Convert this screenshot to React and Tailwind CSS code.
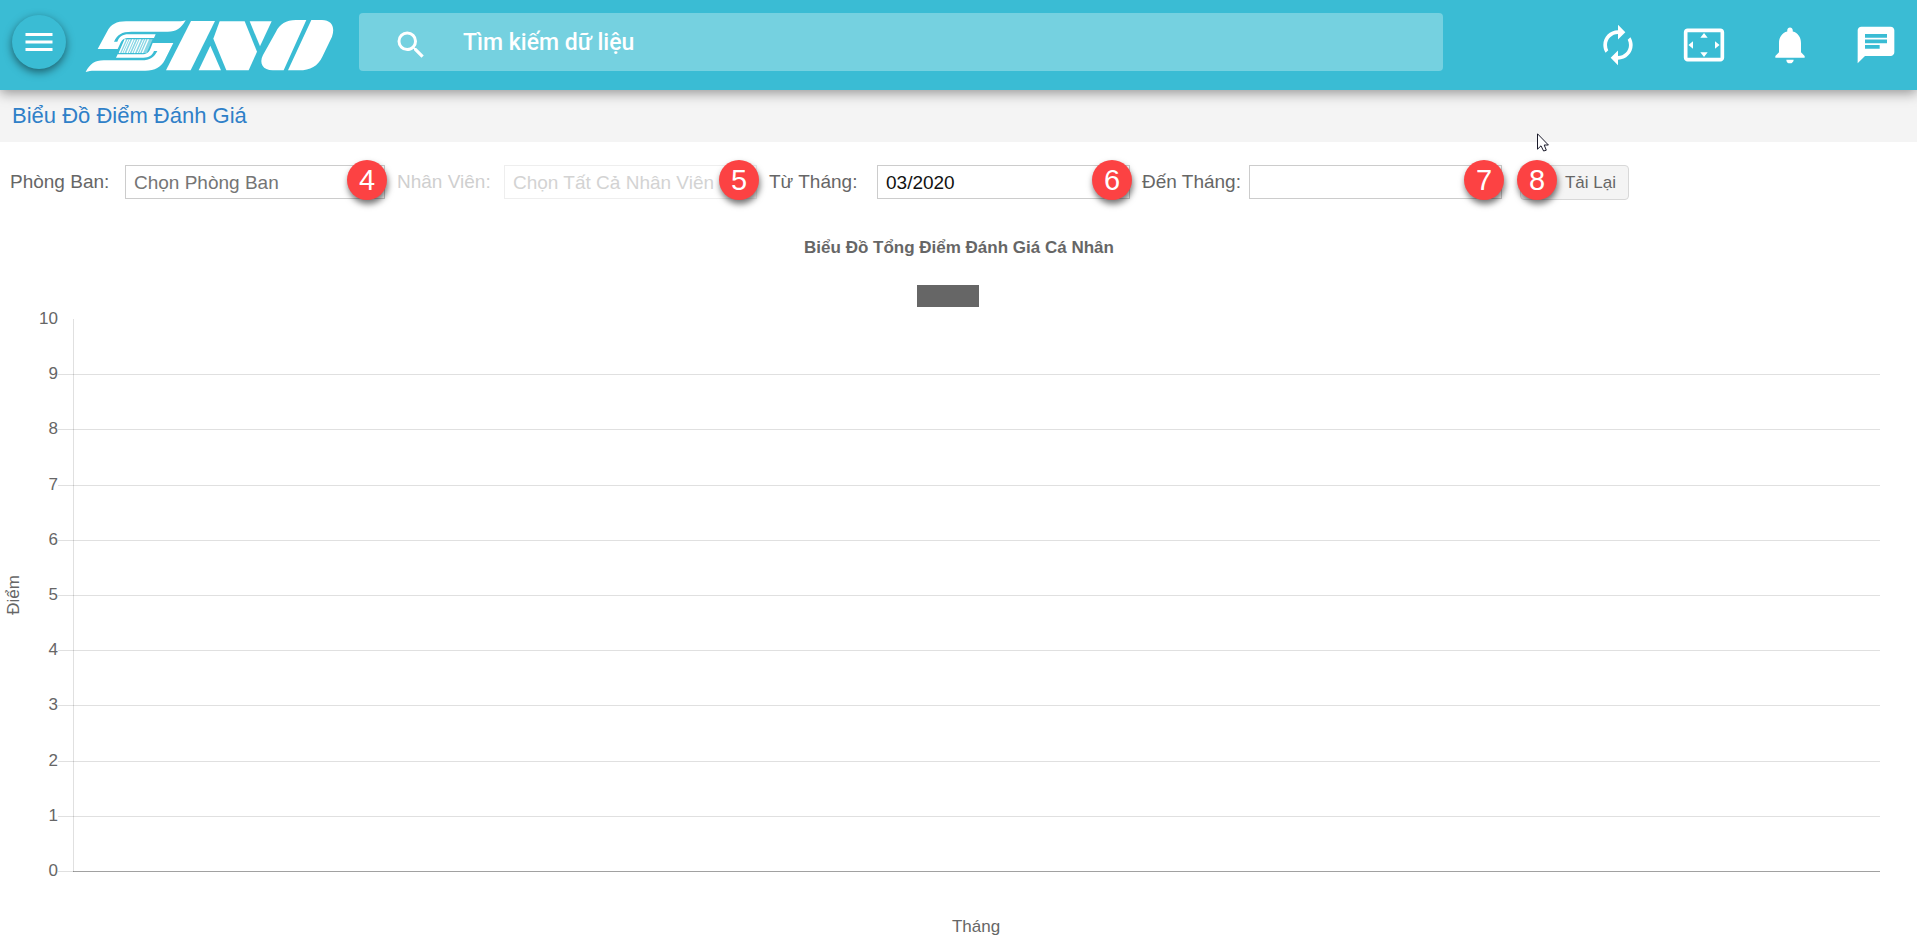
import React from "react";
import {
  MdAutorenew,
  MdSettingsOverscan,
  MdNotifications,
  MdChat,
  MdSearch,
  MdMenu,
} from "react-icons/md";

function Logo() {
  const bars = [376, 384, 390, 399, 406, 414, 421, 430, 437, 445];
  return (
    <svg viewBox="255 57 747 162" className="h-[54px] w-[249px] shrink-0" role="img" aria-label="SINO" fill="#fff">
      <path d="M557 61 C542 86 530 95 503 95 H395 C364 95 352 104 342 125 H352 C358 109 368 103 385 103 H467 L462 114 H388 C372 114 366 119 361 130 L353 147 H293 L321 95 C333 73 349 64 378 64 H535 C545 64 551 63 557 61 Z" />
      <path d="M257 216 C270 192 284 181 311 181 H425 C450 181 462 172 472 153 H462 C456 167 447 173 430 173 H348 L353 163 H425 C440 163 446 158 451 147 L458 129 H520 L494 181 C483 202 465 212 436 212 H283 C273 212 266 213 257 216 Z" />
      <path d="M374 118 H458 L440 159 H356 Z" opacity="0.4" />
      {bars.map((x, i) => (
        <path key={x} d={`M${x} 118 L${x - 18} 159`} stroke="#fff" strokeWidth={i % 3 === 0 ? 4 : 3} />
      ))}
      <path d="M573 63 H645 L572 211 H498 Z" />
      <path d="M631 137 L663 211 H596 Z" />
      <path d="M659 64 H734 L771 155 L746 211 H679 L640 116 Z" />
      <path d="M749 64 H815 L780 139 Z" />
      <path d="M919 60 H888 C858 60 839 73 828 95 L789 165 C776 190 789 211 818 211 H851 Z" />
      <path d="M934 60 H966 C995 60 1006 82 996 110 L967 170 C954 198 931 211 897 211 H864 Z" />
    </svg>
  );
}

function Badge({ n, className }) {
  return (
    <span
      className={`absolute flex h-10 w-10 items-center justify-center rounded-full bg-[#fc4243] text-[29px] leading-none text-white shadow-[1px_4px_6px_rgba(0,0,0,0.55)] ${className}`}
    >
      {n}
    </span>
  );
}

function Field({ id, label, n, labelClass, boxClass, disabled, ...rest }) {
  return (
    <div className={`flex items-center ${disabled ? "text-[#cfcfcf]" : "text-[#666]"}`}>
      <label htmlFor={id} className={`whitespace-nowrap text-[19px] leading-[34px] ${labelClass}`}>
        {label}
      </label>
      <div className={`relative ${boxClass}`}>
        <input
          id={id}
          type="text"
          disabled={disabled}
          className={`block h-[34px] w-full border bg-white px-2 pt-0.5 text-[19px] outline-none ${
            disabled
              ? "border-[#eee] placeholder:text-[#d3d3d3]"
              : "border-[#ccc] text-[#111] placeholder:text-[#757575]"
          }`}
          {...rest}
        />
        <Badge n={n} className="-right-[2px] -top-[5px]" />
      </div>
    </div>
  );
}

function Chart() {
  const ticks = [10, 9, 8, 7, 6, 5, 4, 3, 2, 1, 0];
  const yOf = (v) => Math.round(651 - v * 55.2) + 0.5;
  return (
    <svg viewBox="0 0 1917 732" className="block h-auto w-full" fill="#666" fontSize="17">
      <text x="959" y="33" textAnchor="middle" fontWeight="700">
        Biểu Đồ Tổng Điểm Đánh Giá Cá Nhân
      </text>
      <rect x="917" y="65" width="62" height="22" />
      {ticks.map((v) => (
        <g key={v}>
          {v < 10 && (
            <path d={`M58 ${yOf(v)} H1880`} stroke="#000" strokeOpacity="0.12" />
          )}
          <text x="58" y={yOf(v) + 4} textAnchor="end">
            {v}
          </text>
        </g>
      ))}
      <path d="M73.5 99 V652" stroke="#000" strokeOpacity="0.12" />
      <path d="M73 651.5 H1880" stroke="#000" strokeOpacity="0.28" />
      <text x="976" y="712" textAnchor="middle">
        Tháng
      </text>
      <text transform="translate(19 375) rotate(-90)" textAnchor="middle">
        Điểm
      </text>
    </svg>
  );
}

const actions = [
  ["Tải lại", MdAutorenew],
  ["Toàn màn hình", MdSettingsOverscan],
  ["Thông báo", MdNotifications],
  ["Tin nhắn", MdChat],
];

export default function App() {
  return (
    <div className="relative bg-white font-['Liberation_Sans',Arial,sans-serif]">
      <header className="relative z-10 flex h-[90px] items-center bg-[#3abcd4] pl-3 pr-[19px] text-white shadow-[0_3px_12px_rgba(0,0,0,0.4)]">
        <button
          aria-label="Menu"
          className="mb-1.5 flex h-[54px] w-[54px] shrink-0 items-center justify-center rounded-full bg-[#3abcd4] shadow-[0_3px_8px_rgba(0,0,0,0.5)]"
        >
          <MdMenu size={36} />
        </button>
        <div className="ml-[19px] mr-[25px] mt-0.5">
          <Logo />
        </div>
        <div className="mb-1.5 flex h-[58px] flex-1 items-center rounded bg-[#75d1e0] pl-[34px]">
          <MdSearch size={36} className="mt-1.5 shrink-0" />
          <input
            type="text"
            aria-label="Tìm kiếm dữ liệu"
            placeholder="Tìm kiếm dữ liệu"
            className="ml-[34px] h-full min-w-0 flex-1 bg-transparent font-['Roboto',sans-serif] text-[23px] font-medium text-white outline-none placeholder:text-white"
          />
        </div>
        <nav className="ml-[153px] flex items-center gap-[42px]">
          {actions.map(([name, Icon]) => (
            <button key={name} aria-label={name}>
              <Icon size={44} />
            </button>
          ))}
        </nav>
      </header>

      <div className="flex h-[52px] items-center bg-[#f4f4f4] pl-3">
        <h1 className="text-[22px] leading-[52px] text-[#2f80c8]">Biểu Đồ Điểm Đánh Giá</h1>
      </div>

      <form className="flex h-[78px] items-start pl-2.5 pt-[23px]" onSubmit={(e) => e.preventDefault()}>
        <Field id="dept" label="Phòng Ban:" n="4" labelClass="w-[115px]" boxClass="w-[260px]" placeholder="Chọn Phòng Ban" />
        <div className="ml-3">
          <Field id="staff" label="Nhân Viên:" n="5" labelClass="w-[107px]" boxClass="w-[253px]" placeholder="Chọn Tất Cả Nhân Viên" disabled />
        </div>
        <div className="ml-3">
          <Field id="from" label="Từ Tháng:" n="6" labelClass="w-[108px]" boxClass="w-[253px]" defaultValue="03/2020" />
        </div>
        <div className="ml-3">
          <Field id="to" label="Đến Tháng:" n="7" labelClass="w-[107px]" boxClass="w-[253px]" />
        </div>
        <div className="relative ml-[18px]">
          <button
            type="submit"
            className="h-[35px] w-[109px] rounded border border-[#d8d8d8] bg-[#f4f4f4] pl-8 text-[17px] text-[#666]"
          >
            Tải Lại
          </button>
          <Badge n="8" className="-left-[3px] -top-[5px]" />
          <svg viewBox="0 0 12 19" className="absolute -top-8 left-[17px] h-[19px] w-3" aria-hidden="true">
            <path
              d="M0.5 0.8 V16.2 L4 12.8 L6.6 18 L9.3 17.2 L7.2 12 H11.4 Z"
              fill="#fff"
              stroke="#1a1a2a"
              strokeWidth="1"
            />
          </svg>
        </div>
      </form>

      <Chart />
    </div>
  );
}
